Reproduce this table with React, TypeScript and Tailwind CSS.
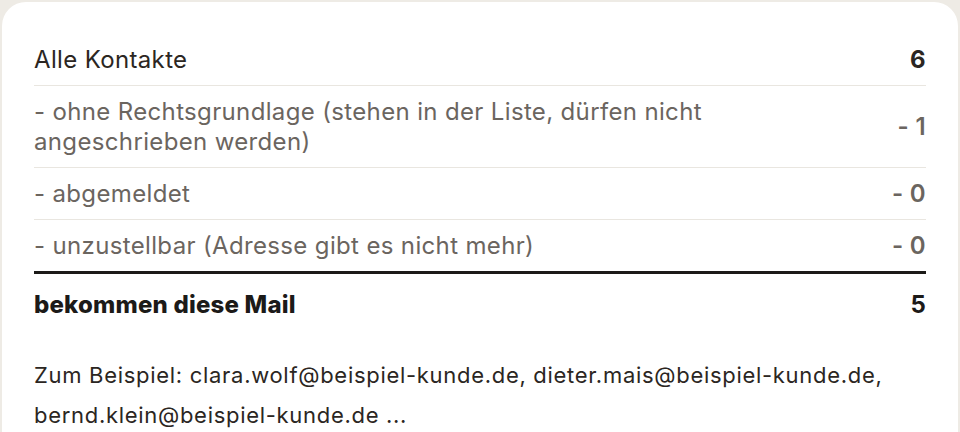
import React from "react";

const rows = [
  { label: "Alle Kontakte", value: "6", main: true },
  {
    label: "- ohne Rechtsgrundlage (stehen in der Liste, dürfen nicht angeschrieben werden)",
    value: "- 1",
  },
  { label: "- abgemeldet", value: "- 0" },
  { label: "- unzustellbar (Adresse gibt es nicht mehr)", value: "- 0" },
];

export default function App() {
  return (
    <div className="h-[432px] w-[960px] overflow-hidden bg-[#eeebe5] pl-[2px] pr-[2px] pt-[2px] font-['Inter',sans-serif]">
      <div className="h-[460px] rounded-[24px] bg-white px-[32px] pt-[32px]">
        {rows.map((row, i) => (
          <div
            key={i}
            className={`flex items-center justify-between py-[10.5px] text-[24px] leading-[30px] tracking-[0.35px] ${
              i < rows.length - 1 ? "border-b border-[#e9e6e0]" : "border-b-[3px] border-[#1c1a18]"
            }`}
          >
            <div className={`max-w-[760px] ${row.main ? "text-[#2b2622]" : "text-[#6b655f]"}`}>
              {row.label}
            </div>
            <div
              className={`whitespace-nowrap ${
                row.main ? "font-bold text-[#2b2622]" : "font-semibold text-[#6b655f]"
              }`}
            >
              {row.value}
            </div>
          </div>
        ))}
        <div className="flex items-center justify-between pb-[10px] pt-[16px] text-[24px] font-extrabold leading-[30px] tracking-[0.2px] text-[#1c1a18]">
          <div>bekommen diese Mail</div>
          <div className="font-bold">5</div>
        </div>
        <p className="mt-[25px] text-[22px] leading-[40px] tracking-[0.7px] text-[#2b2622]">
          Zum Beispiel: clara.wolf@beispiel-kunde.de, dieter.mais@beispiel-kunde.de,
          <br />
          bernd.klein@beispiel-kunde.de ...
        </p>
      </div>
    </div>
  );
}
